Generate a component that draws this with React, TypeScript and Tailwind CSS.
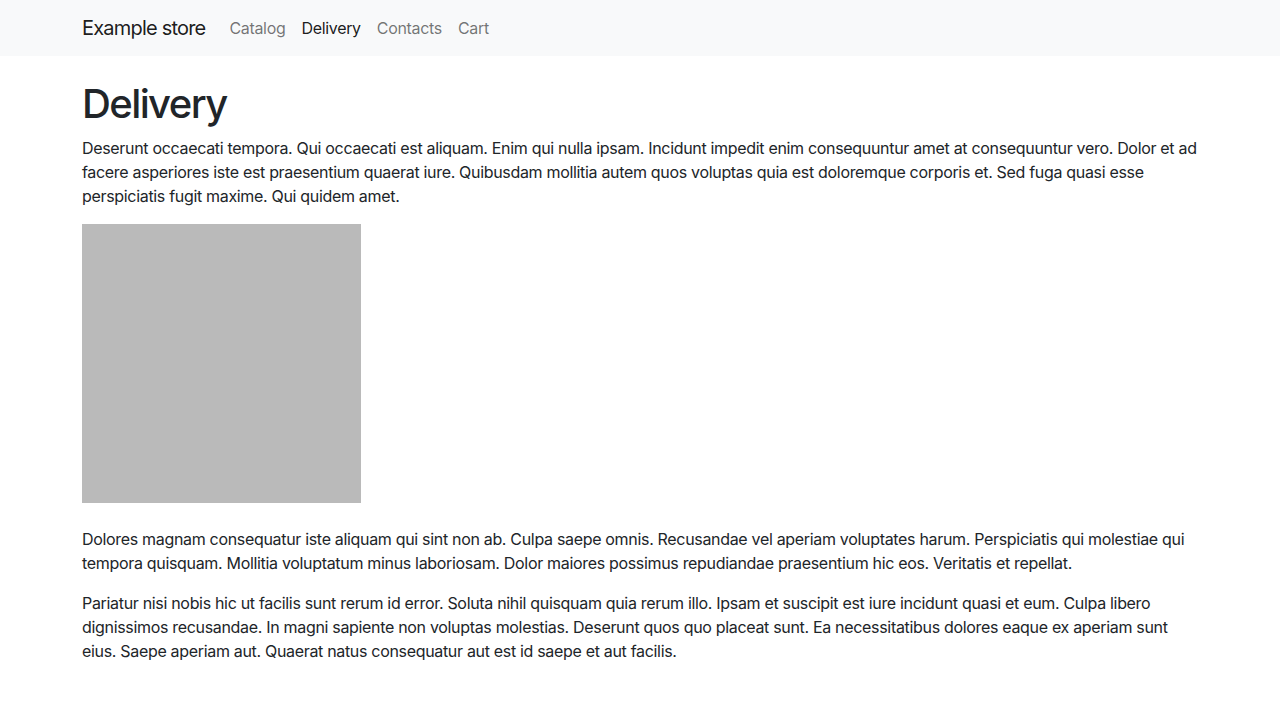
import React from 'react';

const links = [
  { label: 'Catalog', active: false },
  { label: 'Delivery', active: true },
  { label: 'Contacts', active: false },
  { label: 'Cart', active: false },
];

export default function App() {
  return (
    <div className="min-h-screen bg-white text-[#212529] font-['Inter',sans-serif] tracking-[-0.02em]">
      {/* Navbar */}
      <nav className="bg-[#f8f9fa] h-14">
        <div className="w-[1140px] mx-auto px-3 h-full flex items-center">
          <a className="text-xl leading-[30px] text-black/90 mr-4 tracking-[-0.04em]">Example store</a>
          <ul className="flex">
            {links.map((l) => (
              <li key={l.label}>
                <a className={'block px-2 py-2 text-base leading-6 ' + (l.active ? 'text-black/90' : 'text-black/55')}>
                  {l.label}
                </a>
              </li>
            ))}
          </ul>
        </div>
      </nav>

      {/* Page content */}
      <main className="w-[1140px] mx-auto px-3 pt-6">
        <h1 className="text-[40px] leading-[48px] font-medium mb-2 tracking-[-0.04em]">Delivery</h1>
        <p className="text-base leading-6 mb-4">
          Deserunt occaecati tempora. Qui occaecati est aliquam. Enim qui nulla ipsam. Incidunt impedit enim consequuntur amet at consequuntur vero. Dolor et ad facere asperiores iste est praesentium quaerat iure. Quibusdam mollitia autem quos voluptas quia est doloremque corporis et. Sed fuga quasi esse perspiciatis fugit maxime. Qui quidem amet.
        </p>
        <div className="w-[279px] h-[279px] bg-[#bababa] mb-6" />
        <p className="text-base leading-6 mb-4">
          Dolores magnam consequatur iste aliquam qui sint non ab. Culpa saepe omnis. Recusandae vel aperiam voluptates harum. Perspiciatis qui molestiae qui tempora quisquam. Mollitia voluptatum minus laboriosam. Dolor maiores possimus repudiandae praesentium hic eos. Veritatis et repellat.
        </p>
        <p className="text-base leading-6 mb-4">
          Pariatur nisi nobis hic ut facilis sunt rerum id error. Soluta nihil quisquam quia rerum illo. Ipsam et suscipit est iure incidunt quasi et eum. Culpa libero dignissimos recusandae. In magni sapiente non voluptas molestias. Deserunt quos quo placeat sunt. Ea necessitatibus dolores eaque ex aperiam sunt eius. Saepe aperiam aut. Quaerat natus consequatur aut est id saepe et aut facilis.
        </p>
      </main>
    </div>
  );
}
